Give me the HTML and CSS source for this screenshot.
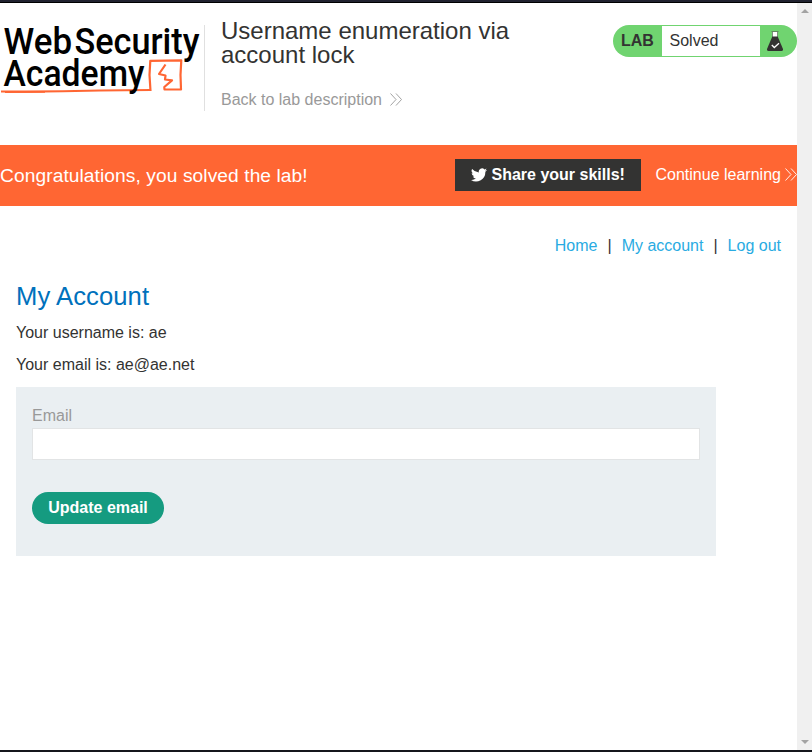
FILE: index.html
```html
<!DOCTYPE html>
<html lang="en">
<head>
<meta charset="utf-8">
<title>Username enumeration via account lock</title>
<link rel="stylesheet" href="styles.css">
</head>
<body>
<div class="window">
  <div class="page">
    <header class="lab-header">
      <svg class="logo" width="204" height="90" viewBox="0 14 204 90">
        <g class="logo-text">
          <text x="3.500" y="53.500" textLength="68.500" lengthAdjust="spacingAndGlyphs">Web</text>
          <text x="74.500" y="53.500" textLength="125" lengthAdjust="spacingAndGlyphs">Security</text>
        </g>
        <g fill="none" stroke="#ff6633" stroke-width="2.200" stroke-linejoin="round">
          <path d="M150.500 91L149.500 75L150.300 60.800L181.300 60.300L180.500 75L181 89.500L164.500 89.300L164.300 87L172 80.300L165 79.500L165.500 75.500L159 74L165.500 64.500"/>
          <path d="M151 90L100 90.500Q50 92 1 91.500"/>
          <path d="M5 92.200L45 91.800" stroke-width="1.800"/>
        </g>
        <text class="logo-text" x="3.500" y="86" textLength="141" lengthAdjust="spacingAndGlyphs">Academy</text>
      </svg>
      <div class="title-block">
        <h1>Username enumeration via<br>account lock</h1>
        <a class="back">Back to lab description
          <svg width="12" height="13" viewBox="0 0 12 13"><path d="M.5 .5L6 6.500L.5 12.500M6 .5L11.500 6.500L6 12.500"/></svg>
        </a>
      </div>
      <div class="status">
        <b>LAB</b>
        <span class="state">Solved</span>
        <svg width="16" height="20" viewBox="0 0 16 20">
          <path d="M5.500 1V6H10.500V1Z" fill="#fff"/>
          <path d="M4.500 .5H11.500M5.500 1V6M10.500 1V6" stroke="#555" fill="none" stroke-width=".6"/>
          <path d="M5.300 5.500H10.700L16 18Q16.200 20 14.500 20H1.500Q-.2 20 0 18Z" fill="#333332"/>
          <path d="M4.800 14L7.300 16.500L12 12.200" fill="none" stroke="#fff" stroke-width="1.300"/>
        </svg>
      </div>
    </header>
    <section class="banner">
      <p>Congratulations, you solved the lab!</p>
      <a class="share">
        <svg width="16" height="14" viewBox="0 0 24 20"><path fill="#fff" d="M24 2.400a9.800 9.800 0 0 1-2.800.8A4.900 4.900 0 0 0 23.300.4a9.800 9.800 0 0 1-3.100 1.200 4.900 4.900 0 0 0-8.400 4.500A14 14 0 0 1 1.700 1a4.900 4.900 0 0 0 1.500 6.600A4.900 4.900 0 0 1 1 7v.1a4.900 4.900 0 0 0 3.900 4.800 4.900 4.900 0 0 1-2.200.1 4.900 4.900 0 0 0 4.600 3.400A9.900 9.900 0 0 1 0 17.500a14 14 0 0 0 21.500-12.400A10 10 0 0 0 24 2.400Z"/></svg>
        <b>Share your skills!</b>
      </a>
      <a class="next">Continue learning
        <svg width="12" height="13" viewBox="0 0 12 13"><path d="M.5 .5L6 6.500L.5 12.500M6 .5L11.500 6.500L6 12.500"/></svg>
      </a>
    </section>
    <nav><a>Home</a><span>|</span><a>My account</a><span>|</span><a>Log out</a></nav>
    <main>
      <h2>My Account</h2>
      <p>Your username is: ae</p>
      <p>Your email is: ae@ae.net</p>
      <form>
        <label for="email">Email</label>
        <input id="email" type="email">
        <button type="button">Update email</button>
      </form>
    </main>
  </div>
  <div class="scrollbar"><i class="up"></i><i class="down"></i></div>
</div>
</body>
</html>
```

FILE: styles.css
```css
* { box-sizing: border-box; }
body {
  margin: 0;
  overflow: hidden;
  background: #fff;
  color: #333332;
  font: 16px/18px "Liberation Sans", Arial, sans-serif;
}
h1, h2, p { margin: 0; font-weight: 400; }
a, b, span { white-space: nowrap; }
.window {
  display: flex;
  height: 752px;
  border-top: 2px solid #20222f;
  border-bottom: 2px solid #15161c;
}
.page { width: 797px; border-top: 1px solid #000; }
.scrollbar {
  display: flex;
  flex-direction: column;
  justify-content: space-between;
  align-items: center;
  width: 15px;
  padding: 6px 0 6px;
  background: #f0f0f0;
  border-top: 1px solid #000;
}
.scrollbar i { border: 4px solid transparent; }
.scrollbar .up { border-top: 0; border-bottom-color: #a3a3a3; }
.scrollbar .down { border-bottom: 0; border-top-color: #a3a3a3; }

.lab-header { display: flex; align-items: flex-start; height: 142px; }
.logo { flex: none; margin-top: 11px; overflow: visible; }
.logo-text { font: 500 37.5px Roboto, sans-serif; fill: #000; }
.title-block {
  width: 409px;
  height: 86px;
  margin-top: 22px;
  padding-left: 16px;
  border-left: 1px solid #e0e0e0;
}
h1 { margin-top: -6px; font-size: 24px; line-height: 24px; }
.back {
  display: flex;
  align-items: center;
  gap: 8px;
  margin-top: 24px;
  color: #999;
}
.back svg, .next svg { fill: none; stroke: currentColor; stroke-width: .9; }
.back svg { margin-top: -2px; }
.status {
  display: flex;
  align-items: center;
  width: 184px;
  height: 32px;
  margin-top: 22px;
  border-radius: 16px;
  background: #70d470;
}
.status b { width: 49px; padding-left: 8px; }
.state {
  width: 98px;
  height: 30px;
  margin-right: 7px;
  padding-left: 7.5px;
  background: #fff;
  line-height: 30px;
}

.banner {
  display: flex;
  align-items: center;
  height: 61px;
  overflow: hidden;
  background: #ff6633;
  color: #fff;
}
.banner p, .share, .next { flex: none; }
.banner p { width: 455px; font-size: 19.2px; line-height: 22px; letter-spacing: .075px; }
.share {
  display: flex;
  align-items: center;
  gap: 4.5px;
  width: 186px;
  height: 32px;
  margin-top: -1px;
  padding-left: 16px;
  background: #333332;
}
.next { display: flex; align-items: center; gap: 4px; margin: -2px 0 0 14.500px; }

nav { display: flex; justify-content: flex-end; padding: 31px 16px 0; }
nav a { color: #29abe2; }
nav span { margin: 0 10px; }
main { padding: 25px 16px 0; }
h2 { margin-bottom: 12px; color: #0071bc; font-size: 25.6px; line-height: 32px; letter-spacing: .08px; }
main p { margin-bottom: 14px; }
form {
  display: flex;
  flex-direction: column;
  align-items: flex-start;
  width: 700px;
  height: 169px;
  margin-top: -1px;
  padding: 20px 16px;
  background: #eaeff2;
}
label { color: #999; }
input {
  width: 668px;
  height: 32px;
  margin: 3px 0 32px;
  border: 1px solid #e2e4e5;
  background: #fff;
}
button {
  width: 132px;
  height: 32px;
  padding: 0;
  border: 0;
  border-radius: 16px;
  background: #159b80;
  color: #fff;
  font: bold 16px "Liberation Sans", Arial, sans-serif;
}
```
